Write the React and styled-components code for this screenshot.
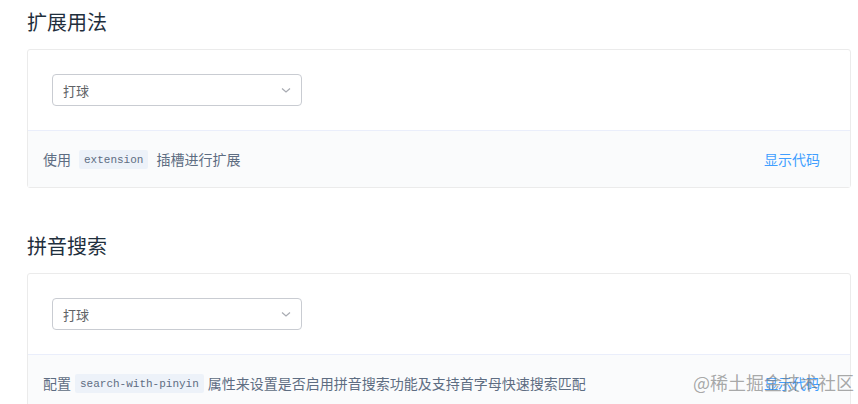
import React from "react";
import styled, { createGlobalStyle } from "styled-components";

const GlobalStyle = createGlobalStyle`
  html, body {
    margin: 0;
    padding: 0;
    background: #fff;
    font-family: "Noto Sans CJK SC", "Noto Sans", sans-serif;
  }
`;

const Page = styled.div`
  position: relative;
  width: 858px;
  height: 404px;
  overflow: hidden;
  padding: 8px 7px 0 27px;
  box-sizing: border-box;
`;

const Section = styled.section`
  margin-bottom: 44px;
`;

const Title = styled.h3`
  margin: 0 0 13px;
  font-size: 20px;
  line-height: 28px;
  font-weight: 400;
  color: #1f2f3d;
`;

const Card = styled.div`
  border: 1px solid #ebebeb;
  border-radius: 3px;
`;

const Source = styled.div`
  padding: 24px;
`;

const Select = styled.div`
  width: 250px;
  height: 32px;
  box-sizing: border-box;
  border: 1px solid #c9ccd2;
  border-radius: 4px;
  display: flex;
  align-items: center;
  justify-content: space-between;
  padding: 0 8px 0 10px;
  font-size: 13px;
  color: #606266;
`;

const Footer = styled.div`
  border-top: 1px solid #eaeefb;
  background: #fafbfc;
  height: 56px;
  display: flex;
  align-items: center;
  justify-content: space-between;
  padding: 0 30px 0 15px;
  font-size: 14px;
  color: #5e6d82;
`;

const Desc = styled.div`
  display: flex;
  align-items: center;
`;

const Code = styled.code`
  font-family: "Liberation Mono", "DejaVu Sans Mono", monospace;
  font-size: 11px;
  line-height: 18px;
  padding: 1px 5px 0;
  margin: 0 ${(p) => (p.$spaced ? "8px" : "4px")};
  background: #edf2f9;
  color: #5e6d82;
  border-radius: 2px;
`;

const Toggle = styled.span`
  font-size: 14px;
  color: #409eff;
`;

const Watermark = styled.div`
  position: absolute;
  right: 4px;
  bottom: 9px;
  font-size: 18px;
  color: rgba(120, 120, 120, 0.65);
`;

const Arrow = () => (
  <svg width="14" height="14" viewBox="0 0 14 14">
    <polyline points="3,5.5 7,9 11,5.5" fill="none" stroke="#a8abb2" strokeWidth="1.2" />
  </svg>
);

const Demo = ({ title, before, code, after, spaced }) => (
  <Section>
    <Title>{title}</Title>
    <Card>
      <Source>
        <Select>
          <span>打球</span>
          <Arrow />
        </Select>
      </Source>
      <Footer>
        <Desc>
          {before}
          <Code $spaced={spaced}>{code}</Code>
          {after}
        </Desc>
        <Toggle>显示代码</Toggle>
      </Footer>
    </Card>
  </Section>
);

const App = () => (
  <Page>
    <GlobalStyle />
    <Demo title="扩展用法" before="使用" code="extension" after="插槽进行扩展" spaced />
    <Demo
      title="拼音搜索"
      before="配置"
      code="search-with-pinyin"
      after="属性来设置是否启用拼音搜索功能及支持首字母快速搜索匹配"
    />
    <Watermark>@稀土掘金技术社区</Watermark>
  </Page>
);

export default App;
